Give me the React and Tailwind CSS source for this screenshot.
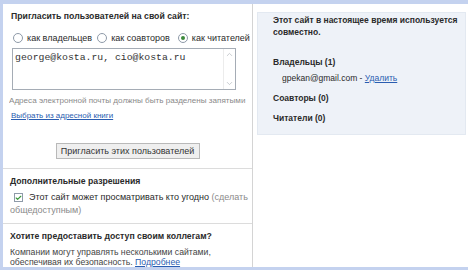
import { Check, ChevronUp, ChevronDown } from "lucide-react";

const font = { fontFamily: '"Liberation Sans", Arial, sans-serif' };

function Radio({ checked, label, className = "" }) {
  return (
    <label className={"flex items-center gap-[4px] " + className}>
      <span className="w-[10px] h-[10px] rounded-full border border-[#8e9aa8] bg-white flex items-center justify-center">
        {checked && <span className="w-[4px] h-[4px] rounded-full bg-[#3c8a3c]" />}
      </span>
      <span>{label}</span>
    </label>
  );
}

export default function App() {
  return (
    <div
      className="w-[468px] h-[270px] overflow-hidden bg-white border-t-4 border-b-[3px] border-l-[3px] border-[#c4d2ef] flex text-[9px] text-[#2a2a2a]"
      style={font}
    >
      {/* left column */}
      <div className="w-[250px] shrink-0 border-r border-[#d4d4d4] flex flex-col">
        <div className="pl-[8px] pr-[4px] pt-[6px] pb-[9px]">
          <div className="font-bold text-[8.7px] leading-[12px]">Пригласить пользователей на свой сайт:</div>
          <div className="flex items-center mt-[10px] leading-[12px] pl-[2px] whitespace-nowrap">
            <Radio label="как владельцев" />
            <Radio label="как соавторов" className="ml-[5px]" />
            <Radio checked label="как читателей" className="ml-[8px]" />
          </div>
          <div className="mt-[4px] ml-[1px] w-[224px] h-[42px] border border-[#a5acb5] flex">
            <div
              className="flex-1 px-[2px] pt-[3px] text-[9.8px] leading-[12px] text-[#333]"
              style={{ fontFamily: '"Liberation Mono", "Courier New", monospace' }}
            >
              george@kosta.ru, cio@kosta.ru
            </div>
            <div className="w-[12px] border-l border-[#ececec] flex flex-col justify-between items-center py-[1px] text-[#b8bcc2]">
              <ChevronUp size={9} strokeWidth={2} />
              <ChevronDown size={9} strokeWidth={2} />
            </div>
          </div>
          <div className="mt-[5px] -ml-[2px] text-[8.1px] leading-[11px] text-[#8a8a8a] whitespace-nowrap overflow-hidden">
            Адреса электронной почты должны быть разделены запятыми
          </div>
          <a className="block mt-[4px] text-[8px] leading-[11px] text-[#2a5db0] underline">
            Выбрать из адресной книги
          </a>
          <div className="flex justify-center mt-[22px] pr-[4px]">
            <button className="h-[16px] w-[144px] border border-[#b9b9b9] bg-[#efefef] text-[9px] leading-[14px] text-[#333]">
              Пригласить этих пользователей
            </button>
          </div>
        </div>
        <div className="border-t border-[#dcdcdc] pl-[7px] pt-[6px] pb-[6px]">
          <div className="font-bold text-[8.7px] leading-[12px]">Дополнительные разрешения</div>
          <div className="flex items-center gap-[6px] mt-[4px] pl-[4px]">
            <span className="w-[9px] h-[9px] shrink-0 border border-[#8e9aa8] bg-white flex items-center justify-center text-[#3c9a3c]">
              <Check size={8} strokeWidth={4} />
            </span>
            <span className="leading-[13px] whitespace-nowrap">
              Этот сайт может просматривать кто угодно <span className="text-[#8a8a8a]">(сделать</span>
            </span>
          </div>
          <div className="leading-[13px] text-[#8a8a8a]">общедоступным)</div>
        </div>
        <div className="border-t border-[#dcdcdc] pl-[7px] pt-[6px]">
          <div className="font-bold text-[8.7px] leading-[12px] whitespace-nowrap">Хотите предоставить доступ своим коллегам?</div>
          <div className="mt-[5px] text-[8.7px] leading-[10px] text-[#444] whitespace-nowrap">
            Компании могут управлять несколькими сайтами,
            <br />
            обеспечивая их безопасность. <a className="text-[#2a5db0] underline">Подробнее</a>
          </div>
        </div>
      </div>

      {/* right column */}
      <div className="flex-1 pl-[4px] pr-[2px] pt-[8px]">
        <div className="h-[123px] bg-[#eef2f8] border border-[#e3e9f1] pl-[15px] pt-[1px] text-[8.5px]">
          <div className="font-bold leading-[12px]">
            Этот сайт в настоящее время используется
            <br />
            совместно.
          </div>
          <div className="font-bold mt-[18px] leading-[12px]">Владельцы (1)</div>
          <div className="mt-[4px] ml-[9px] leading-[12px]">
            gpekan@gmail.com - <a className="text-[#2a5db0] underline">Удалить</a>
          </div>
          <div className="font-bold mt-[8px] leading-[12px]">Соавторы (0)</div>
          <div className="font-bold mt-[8px] leading-[12px]">Читатели (0)</div>
        </div>
      </div>
    </div>
  );
}
